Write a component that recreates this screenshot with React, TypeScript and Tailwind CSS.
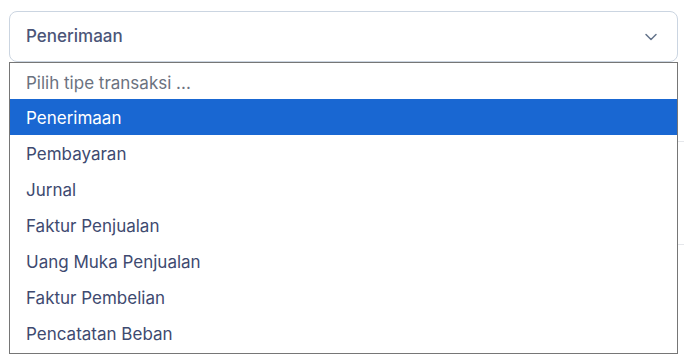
import React from "react";

const items = [
  "Penerimaan",
  "Pembayaran",
  "Jurnal",
  "Faktur Penjualan",
  "Uang Muka Penjualan",
  "Faktur Pembelian",
  "Pencatatan Beban",
];

export default function App() {
  return (
    <div
      className="relative w-[684px] h-[358px] bg-white overflow-hidden"
      style={{ fontFamily: "Inter, 'Noto Sans', sans-serif" }}
    >
      <div className="absolute right-0 top-[141px] w-[8px] h-px bg-[#e5e7eb]" />
      <div className="absolute right-0 top-[244px] w-[8px] h-px bg-[#e5e7eb]" />
      <div className="pl-[9px] pr-[6px] pt-[11px] flex flex-col">
        <div className="h-[51px] border border-[#cbd5e1] rounded-lg flex items-center justify-between pl-[16px] pr-[16px] text-[17px] font-medium text-[#4b5578]">
          <span>Penerimaan</span>
          <svg width="20" height="20" viewBox="0 0 24 24" fill="none" stroke="#64748b" strokeWidth="1.8" strokeLinecap="round" strokeLinejoin="round">
            <path d="m6 9 6 6 6-6" />
          </svg>
        </div>
        <div className="relative z-10 w-[669px] border border-[#767676] bg-white flex flex-col pb-[2px] text-[17px]">
          <div className="h-[36px] flex items-center pl-[16px] pt-[5px] text-[#6b7280]">
            Pilih tipe transaksi ...
          </div>
          {items.map((it, i) => (
            <div
              key={it}
              className={
                i === 0
                  ? "h-[36px] flex items-center pl-[16px] pt-[3px] bg-[#1967d2] text-white"
                  : "h-[36px] flex items-center pl-[16px] pt-[3px] text-[#3e4a70]"
              }
            >
              {it}
            </div>
          ))}
        </div>
      </div>
    </div>
  );
}
